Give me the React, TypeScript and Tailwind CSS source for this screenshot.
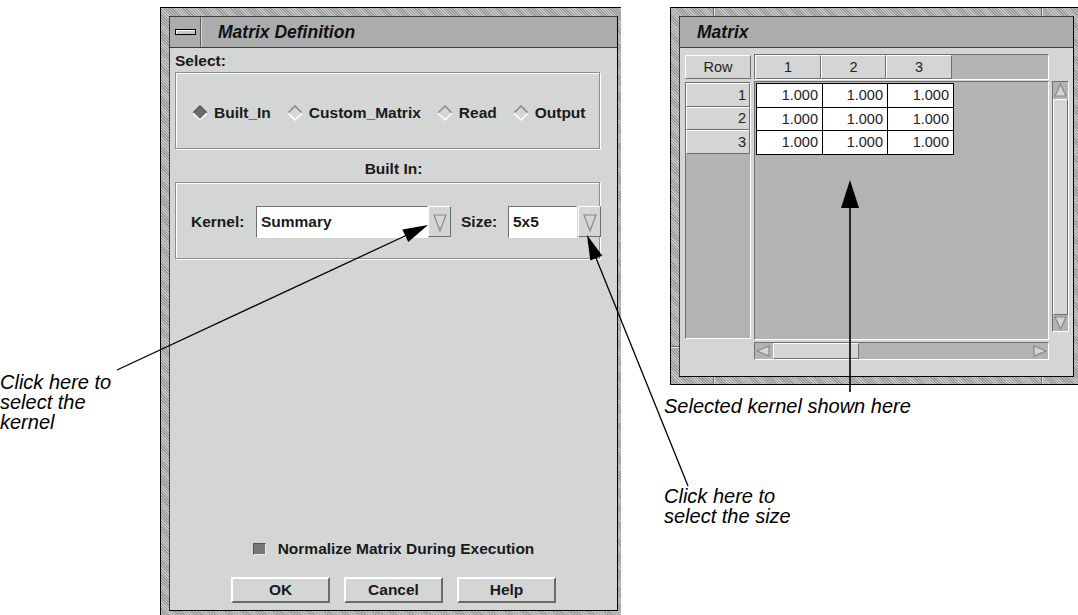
import React from 'react';

const face = 'bg-[#d3d6d4]';
const raised = 'border border-t-white border-l-white border-r-[#6f6f6f] border-b-[#6f6f6f]';
const sunken = 'border border-t-[#6f6f6f] border-l-[#6f6f6f] border-r-white border-b-white';
const etched = 'border border-[#8e8e8e] shadow-[inset_1px_1px_0_#ffffff,1px_1px_0_#ffffff]';
const texture =
  'bg-[repeating-linear-gradient(45deg,#9a9a9a_0px,#9a9a9a_1px,#c6c6c6_1px,#c6c6c6_2px)]';

function Diamond({ on }: { on?: boolean }) {
  return (
    <svg width="16" height="16" viewBox="0 0 16 16" className="shrink-0">
      <polygon points="8,1 15,8 8,15 1,8" fill={on ? '#6c6c6c' : '#d3d6d4'} />
      <polyline points="1,8 8,1 15,8" fill="none" stroke={on ? '#555' : '#8a8a8a'} strokeWidth="1.5" />
      <polyline points="1,8 8,15 15,8" fill="none" stroke="#ffffff" strokeWidth="1.5" />
    </svg>
  );
}

function Tri({ dir, w, h }: { dir: 'up' | 'down' | 'left' | 'right'; w: number; h: number }) {
  const pts = {
    up: `${w / 2},1 ${w - 1},${h - 1} 1,${h - 1}`,
    down: `1,1 ${w - 1},1 ${w / 2},${h - 1}`,
    left: `1,${h / 2} ${w - 1},1 ${w - 1},${h - 1}`,
    right: `1,1 ${w - 1},${h / 2} 1,${h - 1}`,
  }[dir];
  return (
    <svg width={w} height={h} viewBox={`0 0 ${w} ${h}`}>
      <polygon points={pts} fill="#d3d6d4" stroke="#8a8a8a" strokeWidth="1.2" />
    </svg>
  );
}

function DropBtn() {
  return (
    <div className={`w-[23px] h-[31px] ${raised} ${face} flex items-center justify-center pt-[3px] shrink-0`}>
      <Tri dir="down" w={14} h={18} />
    </div>
  );
}

function TitleBar({ title, menu }: { title: string; menu?: boolean }) {
  return (
    <div className="h-[31px] shrink-0 flex items-stretch bg-[#acacac] border-b border-b-[#3c3c3c]">
      {menu && (
        <div className="w-[31px] border-r border-r-[#5e5e5e] shadow-[1px_0_0_#d8d8d8] flex items-center justify-center">
          <div className="w-[21px] h-[6px] border border-black bg-[#c8c8c8] shadow-[inset_1px_1px_0_#ffffff]" />
        </div>
      )}
      <div className="flex items-center italic font-bold text-[17.5px] text-[#111] pl-[17px]">{title}</div>
    </div>
  );
}

function Radio({ label, on }: { label: string; on?: boolean }) {
  return (
    <div className="flex items-center">
      <Diamond on={on} />
      <span className="ml-[6px]">{label}</span>
    </div>
  );
}

function Btn({ label }: { label: string }) {
  return (
    <div
      className={`w-[99px] h-[26px] border-2 border-t-white border-l-white border-r-[#6a6a6a] border-b-[#6a6a6a] ${face} flex items-center justify-center`}
    >
      {label}
    </div>
  );
}

function MatrixDefinition() {
  return (
    <div className={`absolute left-[160px] top-[7px] w-[461px] h-[608px] border-l border-t border-black ${texture} pl-[8px] pt-[8px]`}>
      <div className="w-[449px] h-[595px] border border-t-[#3a3a3a] border-l-[#3a3a3a] border-r-black border-b-black">
        <div className={`h-full flex flex-col ${face} font-bold text-[15.5px] leading-[18px] text-[#1a1a1a]`}>
          <TitleBar title="Matrix Definition" menu />
          <div className="pt-[4px] pl-[5px]">Select:</div>
          <div className={`ml-[5px] mt-[2px] w-[425px] h-[77px] ${etched} flex items-center gap-[16px] pl-[16px] pt-[5px]`}>
            <Radio label="Built_In" on />
            <Radio label="Custom_Matrix" />
            <Radio label="Read" />
            <Radio label="Output" />
          </div>
          <div className="mt-[11px] text-center">Built In:</div>
          <div className={`ml-[5px] mt-[4px] w-[425px] h-[77px] ${etched} flex items-center pl-[15px] pt-[2px]`}>
            <span className="w-[65px] shrink-0">Kernel:</span>
            <div className={`w-[172px] h-[32px] ${sunken} bg-white flex items-center pl-[4px] shrink-0`}>Summary</div>
            <DropBtn />
            <span className="ml-[10px] w-[47px] shrink-0">Size:</span>
            <div className={`w-[69px] h-[32px] ${sunken} bg-white flex items-center pl-[4px] shrink-0`}>5x5</div>
            <div className="ml-[1px]">
              <DropBtn />
            </div>
          </div>
          <div className="mt-auto flex justify-center items-center">
            <div className="w-[13px] h-[12px] bg-[#767676] border border-t-[#555] border-l-[#555] border-r-[#e8e8e8] border-b-[#e8e8e8]" />
            <span className="ml-[12px]">Normalize Matrix During Execution</span>
          </div>
          <div className="mt-[19px] mb-[7px] flex justify-center gap-[14px]">
            <Btn label="OK" />
            <Btn label="Cancel" />
            <Btn label="Help" />
          </div>
        </div>
      </div>
    </div>
  );
}

const rows = [1, 2, 3];
const cols = [
  { n: 1, w: 'w-[66px]' },
  { n: 2, w: 'w-[65px]' },
  { n: 3, w: 'w-[66px]' },
];

function MatrixWindow() {
  return (
    <div className={`absolute left-[670px] top-[7px] w-[408px] h-[378px] border-l border-t border-b border-black ${texture} pl-[8px] pt-[8px]`}>
      {/* frame resize marks */}
      <div className="absolute left-[42px] top-0 w-[2px] h-[8px] border-l border-l-[#6a6a6a] border-r border-r-[#e6e6e6]" />
      <div className="absolute left-[370px] top-0 w-[2px] h-[8px] border-l border-l-[#6a6a6a] border-r border-r-[#e6e6e6]" />
      <div className="absolute left-[42px] bottom-0 w-[2px] h-[7px] border-l border-l-[#6a6a6a] border-r border-r-[#e6e6e6]" />
      <div className="absolute left-[370px] bottom-0 w-[2px] h-[7px] border-l border-l-[#6a6a6a] border-r border-r-[#e6e6e6]" />
      <div className="absolute left-0 top-[338px] w-[8px] h-[2px] border-t border-t-[#6a6a6a] border-b border-b-[#e6e6e6]" />
      <div className="w-[395px] h-[361px] border border-t-[#3a3a3a] border-l-[#3a3a3a] border-r-black border-b-black">
        <div className={`h-full flex flex-col ${face} text-[14.5px] leading-[18px] text-[#222]`}>
          <TitleBar title="Matrix" />
          <div className="flex gap-[3px] pl-[5px] pt-[6px]">
            <div className="flex flex-col w-[66px]">
              <div className={`mt-[1px] h-[24px] ${raised} ${face} flex items-center justify-center`}>Row</div>
              <div className={`mt-[3px] h-[257px] ${sunken} bg-[#b3b3b3] flex flex-col`}>
                {rows.map((r) => (
                  <div key={r} className={`h-[23.5px] ${raised} ${face} flex items-center justify-end pr-[3px]`}>
                    {r}
                  </div>
                ))}
              </div>
            </div>
            <div className="flex flex-col w-[295px]">
              <div className={`h-[26px] ${sunken} bg-[#b3b3b3] flex`}>
                {cols.map((c) => (
                  <div key={c.n} className={`${c.w} h-[24px] ${raised} ${face} flex items-center justify-center`}>
                    {c.n}
                  </div>
                ))}
              </div>
              <div className={`mt-[1px] h-[259px] ${sunken} bg-[#b3b3b3] pl-[1px] pt-[1px]`}>
                <div className="w-[198px] border-l border-t border-black bg-white">
                  {rows.map((r) => (
                    <div key={r} className="flex">
                      {cols.map((c) => (
                        <div
                          key={c.n}
                          className={`${c.w} h-[23.5px] border-r border-b border-black flex items-center justify-end pr-[4px]`}
                        >
                          1.000
                        </div>
                      ))}
                    </div>
                  ))}
                </div>
              </div>
              <div className={`mt-[2px] h-[18px] ${sunken} bg-[#b3b3b3] flex items-center`}>
                <div className="w-[16px] h-[16px] flex items-center justify-center">
                  <Tri dir="left" w={14} h={12} />
                </div>
                <div className={`ml-[2px] w-[86px] h-[16px] ${raised} ${face}`} />
                <div className="flex-1" />
                <div className="w-[16px] h-[16px] flex items-center justify-center">
                  <Tri dir="right" w={14} h={12} />
                </div>
              </div>
            </div>
            <div className={`mt-[27px] w-[17px] h-[251px] ${sunken} bg-[#b3b3b3] flex flex-col items-center`}>
              <div className="h-[16px] flex items-center">
                <Tri dir="up" w={13} h={14} />
              </div>
              <div className={`mt-[1px] w-[15px] flex-1 ${raised} ${face}`} />
              <div className="h-[16px] flex items-center">
                <Tri dir="down" w={13} h={14} />
              </div>
            </div>
          </div>
        </div>
      </div>
    </div>
  );
}

function Callouts() {
  return (
    <>
      <svg className="absolute left-0 top-0 pointer-events-none" width="1078" height="615" viewBox="0 0 1078 615">
        <line x1="117" y1="370" x2="406" y2="235.5" stroke="#000" strokeWidth="1.3" />
        <polygon points="428,225 408.3,242 402.3,229.4" fill="#000" />
        <line x1="688" y1="486" x2="596" y2="258" stroke="#000" strokeWidth="1.3" />
        <polygon points="587,235 602.3,255.8 590.3,260.6" fill="#000" />
        <line x1="850" y1="392" x2="850" y2="206" stroke="#000" strokeWidth="1.6" />
        <polygon points="850,180 859,208 841,208" fill="#000" />
      </svg>
      <div className="absolute left-0 top-[372px] italic text-[20px] leading-[20px] text-black">
        Click here to
        <br />
        select the
        <br />
        kernel
      </div>
      <div className="absolute left-[664px] top-[396px] italic text-[20px] leading-[20px] text-black">
        Selected kernel shown here
      </div>
      <div className="absolute left-[664px] top-[486px] italic text-[20px] leading-[20px] text-black">
        Click here to
        <br />
        select the size
      </div>
    </>
  );
}

export default function App() {
  return (
    <div className="relative w-[1078px] h-[615px] bg-white overflow-hidden font-['Liberation_Sans',Arial,sans-serif]">
      <MatrixDefinition />
      <MatrixWindow />
      <Callouts />
    </div>
  );
}
